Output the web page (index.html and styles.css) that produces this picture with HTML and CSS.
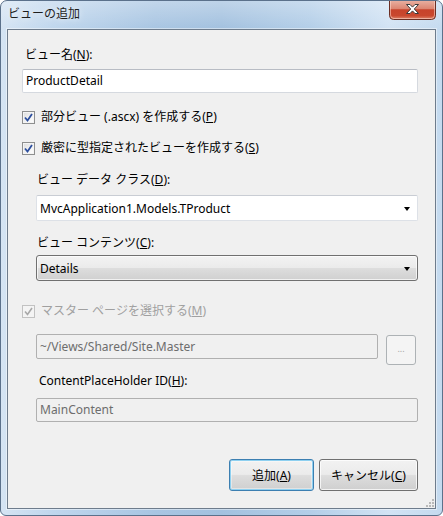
FILE: index.html
```html
<!DOCTYPE html>
<html lang="ja">
<head>
<meta charset="utf-8">
<title>ビューの追加</title>
<link rel="stylesheet" href="styles.css">
</head>
<body>
<div class="window">
  <div class="titlebar">
    <span class="title">ビューの追加</span>
    <div class="close">
      <svg width="47" height="20" viewBox="0 0 47 20">
        <defs>
          <linearGradient id="cg" x1="0" y1="0" x2="0" y2="1">
            <stop offset="0" stop-color="#eab3a4"/>
            <stop offset="0.45" stop-color="#dc8571"/>
            <stop offset="0.5" stop-color="#c7432b"/>
            <stop offset="0.8" stop-color="#c9472e"/>
            <stop offset="1" stop-color="#e08a70"/>
          </linearGradient>
        </defs>
        <path d="M0.5 0 V15.5 Q0.5 19.5 4.5 19.5 H42.5 Q46.5 19.5 46.5 15.5 V0" fill="url(#cg)" stroke="#6a2e24"/>
        <path d="M1.5 0 V15 Q1.5 18.5 5 18.5 H42 Q45.5 18.5 45.5 15 V0" fill="none" stroke="rgba(255,220,210,0.55)"/>
        <path d="M17.5 4.5 h3.5 l2.5 2.6 l2.5 -2.6 h3.5 l-4.2 4.5 l4.2 4.5 h-3.5 l-2.5 -2.6 l-2.5 2.6 h-3.5 l4.2 -4.5 z" fill="#ffffff" stroke="#3b3b3b" stroke-width="1" stroke-linejoin="round"/>
      </svg>
    </div>
  </div>
  <div class="client">
    <div class="label">ビュー名(<u>N</u>):</div>
    <div class="textbox field-name">ProductDetail</div>

    <div class="check row-p"><span class="box"><svg width="9" height="9" viewBox="0 0 9 9"><path d="M1 4.5 L3.5 7.5 L8 1" fill="none" stroke="#2d4f9e" stroke-width="1.8"/></svg></span><span>部分ビュー (.ascx) を作成する(<u>P</u>)</span></div>
    <div class="check row-s"><span class="box"><svg width="9" height="9" viewBox="0 0 9 9"><path d="M1 4.5 L3.5 7.5 L8 1" fill="none" stroke="#2d4f9e" stroke-width="1.8"/></svg></span><span>厳密に型指定されたビューを作成する(<u>S</u>)</span></div>

    <div class="indent">
      <div class="label label-d">ビュー データ クラス(<u>D</u>):</div>
      <div class="combo combo-edit"><span>MvcApplication1.Models.TProduct</span><span class="arrow"></span></div>
      <div class="label label-c">ビュー コンテンツ(<u>C</u>):</div>
      <div class="combo combo-list"><span>Details</span><span class="arrow"></span></div>
    </div>

    <div class="check disabled row-m"><span class="box"><svg width="9" height="9" viewBox="0 0 9 9"><path d="M1 4.5 L3.5 7.5 L8 1" fill="none" stroke="#a8a8a8" stroke-width="1.6"/></svg></span><span>マスター ページを選択する(<u>M</u>)</span></div>

    <div class="indent">
      <div class="master-row">
        <div class="textbox disabled-box master">~/Views/Shared/Site.Master</div>
        <div class="btn-browse">...</div>
      </div>
      <div class="label label-h">ContentPlaceHolder ID(<u>H</u>):</div>
      <div class="textbox disabled-box cph">MainContent</div>
    </div>

    <div class="buttons">
      <div class="btn default">追加(<u>A</u>)</div>
      <div class="btn cancel">キャンセル(<u>C</u>)</div>
    </div>
    <div class="grip">
      <svg width="8" height="8" viewBox="0 0 8 8">
        <g fill="#b9b9b9">
          <rect x="6" y="0" width="2" height="2"/>
          <rect x="3" y="3" width="2" height="2"/><rect x="6" y="3" width="2" height="2"/>
          <rect x="0" y="6" width="2" height="2"/><rect x="3" y="6" width="2" height="2"/><rect x="6" y="6" width="2" height="2"/>
        </g>
      </svg>
    </div>
  </div>
</div>
</body>
</html>
```

FILE: styles.css
```css
* { box-sizing: border-box; }
html, body {
  margin: 0;
  padding: 0;
  background: #ffffff;
}
body {
  width: 443px;
  height: 516px;
  overflow: hidden;
  font-family: "Noto Sans", "Noto Sans CJK JP", sans-serif;
  font-size: 12px;
  color: #000;
}
u { text-decoration: underline; text-underline-offset: 1px; }

.window {
  position: relative;
  width: 443px;
  height: 516px;
  border: 1px solid #5b718b;
  border-radius: 7px 7px 6px 6px;
  background:
    linear-gradient(to bottom, rgba(255,255,255,0.3) 0px, rgba(255,255,255,0) 28px),
    linear-gradient(to right, #d5e4f3 0%, #bfd6ed 12%, #a8c5e2 35%, #a3c1df 50%, #b3cee8 70%, #d2e3f4 88%, #c4daef 100%);
  display: flex;
  flex-direction: column;
  overflow: hidden;
}

.titlebar {
  height: 28px;
  position: relative;
  flex: none;
}
.title {
  position: absolute;
  left: 7px;
  top: 5px;
  line-height: 16px;
  font-size: 12px;
  color: #1e1e1e;
  text-shadow: 0 0 6px rgba(255,255,255,0.9);
}
.close {
  position: absolute;
  left: 388px;
  top: -1px;
  width: 47px;
  height: 20px;
}
.close svg { display: block; }

.client {
  position: relative;
  margin: 0 6px 6px 6px;
  height: 480px;
  border: 1px solid #6e7c8c;
  box-shadow: 0 0 0 1px rgba(255,255,255,0.45);
  background: #f0f0f0;
  padding: 17px 17px 0 14px;
}

.label {
  height: 16px;
  line-height: 16px;
  padding-left: 3px;
  white-space: nowrap;
}

.textbox {
  height: 24px;
  line-height: 22px;
  background: #fff;
  border: 1px solid #d5d9df;
  border-top-color: #b8bcc4;
  border-radius: 2px;
  padding-left: 3px;
  white-space: nowrap;
}
.field-name { margin-top: 6px; }

.check {
  display: flex;
  align-items: center;
  height: 16px;
  line-height: 16px;
  white-space: nowrap;
}
.check .box {
  width: 13px;
  height: 13px;
  border: 1px solid #8e8f8f;
  background: linear-gradient(135deg, #dcdcdc 0%, #f4f4f4 60%, #ffffff 100%);
  box-shadow: inset 0 0 0 1px #f4f4f4;
  margin-right: 6px;
  display: flex;
  align-items: center;
  justify-content: center;
  flex: none;
}
.check .box svg { display: block; }
.row-p { margin-top: 16px; }
.row-s { margin-top: 15px; }
.row-m { margin-top: 22px; }
.check.disabled { color: #a0a0a0; }
.check.disabled .box {
  border-color: #c2c2c2;
  background: #f4f4f4;
  box-shadow: none;
}

.indent { padding-left: 14px; }
.label-d { margin-top: 16px; padding-left: 1px; }
.label-c { margin-top: 14px; padding-left: 1px; }
.label-h { margin-top: 8px; padding-left: 3px; }

.combo {
  height: 26px;
  display: flex;
  align-items: center;
  justify-content: space-between;
  padding: 0 7px 0 3px;
  white-space: nowrap;
}
.combo-edit {
  margin-top: 7px;
  background: #fff;
  border: 1px solid #dde1e7;
  border-top-color: #c9cdd4;
  border-radius: 2px;
}
.combo-list {
  margin-top: 4px;
  border: 1px solid #707070;
  border-radius: 3px;
  background: linear-gradient(to bottom, #f3f3f3 0%, #ebebeb 48%, #dddddd 52%, #d0d0d0 100%);
  box-shadow: inset 0 0 0 1px rgba(255,255,255,0.7);
}
.arrow {
  width: 0;
  height: 0;
  border-left: 3.5px solid transparent;
  border-right: 3.5px solid transparent;
  border-top: 4px solid #000;
  margin-top: 2px;
}

.master-row {
  margin-top: 15px;
  display: flex;
  align-items: flex-start;
  gap: 8px;
}
.disabled-box {
  background: #f0f0f0;
  border: 1px solid #b0b0b0;
  border-radius: 2px;
  color: #6d6d6d;
}
.master { width: 342px; height: 25px; line-height: 23px; }
.btn-browse {
  margin-top: 1px;
  width: 30px;
  height: 30px;
  border: 1px solid #adb2b5;
  border-radius: 3px;
  background: #f4f4f4;
  color: #a6a6a6;
  font-size: 9px;
  text-align: center;
  line-height: 26px;
}
.cph { margin-top: 9px; }

.buttons {
  margin-top: 37px;
  display: flex;
  justify-content: flex-end;
  gap: 5px;
}
.btn {
  height: 32px;
  border: 1px solid #707070;
  border-radius: 3px;
  background: linear-gradient(to bottom, #f2f2f2 0%, #ebebeb 48%, #dddddd 52%, #cfcfcf 100%);
  box-shadow: inset 0 0 0 1px rgba(255,255,255,0.75);
  display: flex;
  align-items: center;
  justify-content: center;
  white-space: nowrap;
}
.btn.default {
  width: 85px;
  border-color: #3c7fb1;
  box-shadow: inset 0 0 0 1px #8ed0f0, inset 0 0 0 2px rgba(255,255,255,0.4);
}
.btn.cancel { width: 99px; }

.grip {
  position: absolute;
  right: 1px;
  bottom: 1px;
  width: 8px;
  height: 8px;
}
.grip svg { display: block; }
```
